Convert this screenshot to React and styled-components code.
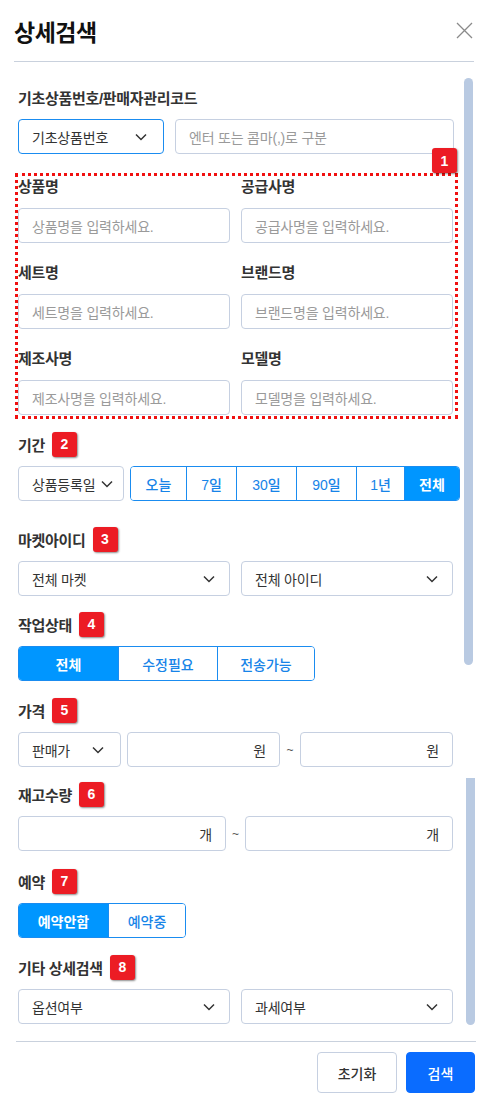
import React from 'react';
import styled, { createGlobalStyle } from 'styled-components';

const GlobalStyle = createGlobalStyle`
  * { box-sizing: border-box; }
  body {
    margin: 0;
    background: #fff;
    font-family: "Liberation Sans", "Noto Sans CJK KR", sans-serif;
    color: #222;
  }
`;

const Panel = styled.div`
  width: 485px;
  height: 1098px;
  display: flex;
  flex-direction: column;
  background: #fff;
  overflow: hidden;
`;

const Header = styled.div`
  height: 61px;
  display: flex;
  align-items: center;
  justify-content: space-between;
  padding: 0 12px 0 14px;
`;

const Title = styled.h1`
  margin: 0;
  font-size: 23px;
  font-weight: 700;
  color: #111;
  letter-spacing: -0.5px;
`;

const CloseButton = styled.button`
  width: 18px;
  height: 18px;
  padding: 0;
  border: none;
  background: none;
  display: flex;
  align-items: center;
  justify-content: center;
`;

const Divider = styled.div`
  height: 1px;
  background: #c9d1dd;
  margin: 0 ${(p) => p.$right}px 0 ${(p) => p.$left}px;
`;

const Body = styled.div`
  flex: 1;
  display: flex;
`;

const Content = styled.div`
  width: 458px;
  padding: 22px 0 15px 18px;
  display: flex;
  flex-direction: column;
`;

const Track = styled.div`
  width: 9px;
  margin-left: 6px;
  display: flex;
  flex-direction: column;
`;

const Thumb = styled.div`
  width: 9px;
  height: ${(p) => p.$h}px;
  margin-top: ${(p) => p.$top}px;
  margin-left: ${(p) => p.$shift || 0}px;
  background: #b9cae2;
  border-radius: ${(p) => (p.$flatTop ? '0 0 5px 5px' : '5px')};
`;

const Section = styled.div`
  margin-top: ${(p) => p.$gap || 0}px;
  display: flex;
  flex-direction: column;
`;

const LabelRow = styled.div`
  height: 26px;
  display: flex;
  align-items: center;
  gap: 7px;
  margin-bottom: 9px;
`;

const Label = styled.span`
  font-size: 15px;
  font-weight: 700;
  color: #333;
  letter-spacing: -0.3px;
`;

const Badge = styled.span`
  width: 25px;
  height: 25px;
  border-radius: 3px;
  background: #ec1c24;
  color: #fff;
  font-size: 14px;
  font-weight: 700;
  display: inline-flex;
  align-items: center;
  justify-content: center;
  box-shadow: 1px 1px 2px rgba(0, 0, 0, 0.45);
`;

const Row = styled.div`
  display: flex;
  align-items: center;
  gap: ${(p) => p.$gap ?? 6}px;
  width: ${(p) => p.$w || 435}px;
`;

const Grid = styled.div`
  display: grid;
  grid-template-columns: 212px 212px;
  column-gap: 11px;
  row-gap: 20px;
`;

const Field = styled.div`
  display: flex;
  flex-direction: column;
`;

const FieldLabel = styled.span`
  height: 20px;
  line-height: 20px;
  margin-bottom: 11px;
  font-size: 15px;
  font-weight: 700;
  color: #333;
  letter-spacing: -0.3px;
`;

const DashedBox = styled.div`
  position: relative;
  margin-top: 19px;
  margin-left: -3px;
  width: 443px;
  border: 3px dotted #f01010;
  padding: 1px 0 1px 0;
`;

const CornerBadge = styled(Badge)`
  position: absolute;
  top: -28px;
  right: -2px;
`;

const Input = styled.div`
  width: ${(p) => (p.$w ? `${p.$w}px` : '100%')};
  height: 35px;
  border: 1px solid #c6d0e1;
  border-radius: 4px;
  padding: 0 13px;
  display: flex;
  align-items: center;
  justify-content: ${(p) => (p.$end ? 'flex-end' : 'flex-start')};
  font-size: 14px;
  color: ${(p) => (p.$placeholder ? '#9a9a9a' : '#333')};
  background: #fff;
  flex-shrink: 0;
  letter-spacing: -0.2px;
`;

const Select = styled.div`
  width: ${(p) => (p.$w ? `${p.$w}px` : '100%')};
  height: 35px;
  border: 1px solid ${(p) => (p.$focus ? '#1a8cf0' : '#c6d0e1')};
  border-radius: 4px;
  padding: 0 ${(p) => p.$pr ?? 14}px 0 ${(p) => p.$pl ?? 13}px;
  display: flex;
  align-items: center;
  justify-content: space-between;
  font-size: 14px;
  color: #333;
  background: #fff;
  flex-shrink: 0;
  letter-spacing: -0.2px;
`;

const Segmented = styled.div`
  display: flex;
  height: 35px;
  border: 1px solid #1a8cf0;
  border-radius: 4px;
  overflow: hidden;
  flex-shrink: 0;
`;

const Segment = styled.div`
  width: ${(p) => p.$w}px;
  display: flex;
  align-items: center;
  justify-content: center;
  font-size: 14px;
  font-weight: ${(p) => (p.$active ? 700 : 500)};
  color: ${(p) => (p.$active ? '#fff' : '#1784e8')};
  background: ${(p) => (p.$active ? '#0096ff' : '#fff')};
  border-left: ${(p) => (p.$first ? 'none' : '1px solid #1a8cf0')};
`;

const Tilde = styled.span`
  width: ${(p) => p.$w}px;
  text-align: center;
  font-size: 12px;
  color: #555;
  flex-shrink: 0;
  margin: 0 -6px;
`;

const Footer = styled.div`
  display: flex;
  justify-content: flex-end;
  gap: 9px;
  padding: 10px 10px 5px 0;
`;

const Button = styled.button`
  height: 41px;
  width: ${(p) => p.$w}px;
  border-radius: 4px;
  font-family: inherit;
  font-size: 14px;
  font-weight: 500;
  border: 1px solid ${(p) => (p.$primary ? '#0a6cff' : '#c6d0e1')};
  background: ${(p) => (p.$primary ? '#0a6cff' : '#fff')};
  color: ${(p) => (p.$primary ? '#fff' : '#333')};
`;

const Chevron = () => (
  <svg width="12" height="8" viewBox="0 0 12 8" fill="none">
    <polyline points="1,1.5 6,6.5 11,1.5" stroke="#333" strokeWidth="1.5" />
  </svg>
);

const fields = [
  ['상품명', '상품명을 입력하세요.'],
  ['공급사명', '공급사명을 입력하세요.'],
  ['세트명', '세트명을 입력하세요.'],
  ['브랜드명', '브랜드명을 입력하세요.'],
  ['제조사명', '제조사명을 입력하세요.'],
  ['모델명', '모델명을 입력하세요.'],
];

const periods = [
  ['오늘', 55],
  ['7일', 50],
  ['30일', 60],
  ['90일', 60],
  ['1년', 48],
  ['전체', 55],
];

const SectionTitle = ({ children, n }) => (
  <LabelRow>
    <Label>{children}</Label>
    {n && <Badge>{n}</Badge>}
  </LabelRow>
);

export default function App() {
  return (
    <Panel>
      <GlobalStyle />
      <Header>
        <Title>상세검색</Title>
        <CloseButton>
          <svg width="17" height="17" viewBox="0 0 17 17">
            <path d="M1 1 L16 16 M16 1 L1 16" stroke="#8a8a8a" strokeWidth="1.3" />
          </svg>
        </CloseButton>
      </Header>
      <Divider $left={14} $right={11} />
      <Body>
        <Content>
          <Section>
            <SectionTitle>기초상품번호/판매자관리코드</SectionTitle>
            <Row $gap={11} $w={436}>
              <Select $w={146} $focus $pr={16}>
                기초상품번호
                <Chevron />
              </Select>
              <Input $w={279} $placeholder>엔터 또는 콤마(,)로 구분</Input>
            </Row>
          </Section>

          <DashedBox>
            <CornerBadge>1</CornerBadge>
            <Grid>
              {fields.map(([label, ph]) => (
                <Field key={label}>
                  <FieldLabel>{label}</FieldLabel>
                  <Input $placeholder>{ph}</Input>
                </Field>
              ))}
            </Grid>
          </DashedBox>

          <Section $gap={12}>
            <SectionTitle n="2">기간</SectionTitle>
            <Row $w={440}>
              <Select $w={106} $pr={10}>
                상품등록일
                <Chevron />
              </Select>
              <Segmented>
                {periods.map(([t, w], i) => (
                  <Segment key={t} $w={w} $first={i === 0} $active={t === '전체'}>
                    {t}
                  </Segment>
                ))}
              </Segmented>
            </Row>
          </Section>

          <Section $gap={25}>
            <SectionTitle n="3">마켓아이디</SectionTitle>
            <Row $gap={11}>
              <Select $w={212}>
                전체 마켓
                <Chevron />
              </Select>
              <Select $w={212}>
                전체 아이디
                <Chevron />
              </Select>
            </Row>
          </Section>

          <Section $gap={15}>
            <SectionTitle n="4">작업상태</SectionTitle>
            <Row>
              <Segmented>
                <Segment $w={99} $first $active>전체</Segment>
                <Segment $w={99}>수정필요</Segment>
                <Segment $w={97}>전송가능</Segment>
              </Segmented>
            </Row>
          </Section>

          <Section $gap={16}>
            <SectionTitle n="5">가격</SectionTitle>
            <Row $gap={6}>
              <Select $w={103} $pr={16}>
                판매가
                <Chevron />
              </Select>
              <Input $w={153} $end>원</Input>
              <Tilde $w={20}>~</Tilde>
              <Input $w={153} $end>원</Input>
            </Row>
          </Section>

          <Section $gap={14}>
            <SectionTitle n="6">재고수량</SectionTitle>
            <Row $gap={6}>
              <Input $w={208} $end>개</Input>
              <Tilde $w={19}>~</Tilde>
              <Input $w={208} $end>개</Input>
            </Row>
          </Section>

          <Section $gap={17}>
            <SectionTitle n="7">예약</SectionTitle>
            <Row>
              <Segmented>
                <Segment $w={89} $first $active>예약안함</Segment>
                <Segment $w={77}>예약중</Segment>
              </Segmented>
            </Row>
          </Section>

          <Section $gap={16}>
            <SectionTitle n="8">기타 상세검색</SectionTitle>
            <Row $gap={11}>
              <Select $w={212}>
                옵션여부
                <Chevron />
              </Select>
              <Select $w={212}>
                과세여부
                <Chevron />
              </Select>
            </Row>
          </Section>
        </Content>
        <Track>
          <Thumb $top={16} $h={587} />
          <Thumb $top={113} $h={247} $shift={2} $flatTop />
        </Track>
      </Body>
      <Divider $left={16} $right={9} />
      <Footer>
        <Button $w={80}>초기화</Button>
        <Button $w={69} $primary>검색</Button>
      </Footer>
    </Panel>
  );
}
